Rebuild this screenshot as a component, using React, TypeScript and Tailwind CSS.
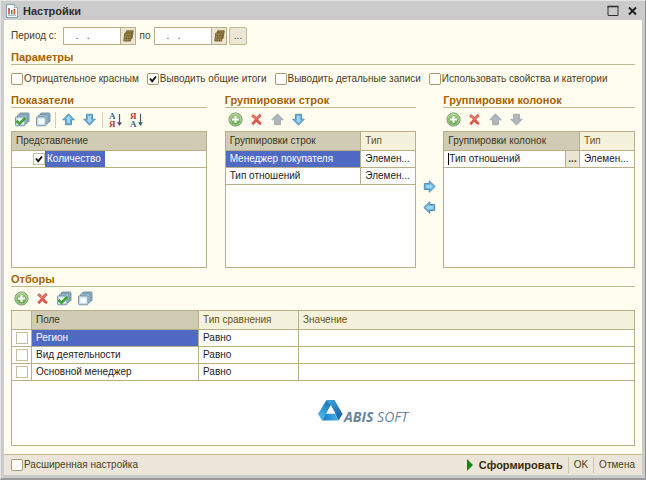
import React, { useState } from "react";

type IconProps = { muted?: boolean };

function AddIcon() {
  return (
    <svg width="15" height="15" viewBox="0 0 15 15">
      <defs>
        <linearGradient id="add" x1="0" y1="0" x2="0" y2="1">
          <stop offset="0" stopColor="#a9d08c" />
          <stop offset="1" stopColor="#5a9f45" />
        </linearGradient>
      </defs>
      <circle cx="7.5" cy="7.5" r="6.6" fill="url(#add)" stroke="#7f9a70" />
      <circle cx="7.5" cy="7.5" r="5.6" fill="none" stroke="#c3dfb0" strokeWidth=".8" />
      <path d="M7.500 4v7M4 7.500h7" stroke="#fff" strokeWidth="2" />
    </svg>
  );
}

function DeleteIcon() {
  return (
    <svg width="13" height="13" viewBox="0 0 13 13">
      <path d="M2 2.200Q5 4 6.500 6.500Q8 9.500 11 11M10.800 1.800Q8 4 6.500 6.500Q4.500 9 2.300 11.200" fill="none" stroke="#e0584c" strokeWidth="2.800" />
      <path d="M2.500 2.500L6.500 6M10 2.500L6.500 6" stroke="#f4968a" strokeWidth="1" />
    </svg>
  );
}

function ArrowIcon({ dir, muted }: IconProps & { dir: "up" | "down" | "left" | "right" }) {
  const turn = { up: 0, right: 90, down: 180, left: 270 }[dir];
  return (
    <svg width="13" height="13" viewBox="0 0 13 13">
      <g transform={`rotate(${turn} 6.5 6.5)`}>
        <path
          d="M6.500 .8L12.300 6.800H9.500V11.700H3.500V6.800H.7Z"
          fill={muted ? "#aab3b9" : "#62b2e2"}
          stroke={muted ? "#a3abb0" : "#5a86a6"}
          strokeWidth=".9"
          strokeLinejoin="round"
        />
        <path d="M6.500 2.800L9 5.800H8V10H5V5.800H4Z" fill={muted ? "#b1b9be" : "#9ad6f6"} />
      </g>
    </svg>
  );
}

function StackIcon({ checked }: { checked?: boolean }) {
  return (
    <svg width="16" height="15" viewBox="0 0 16 15">
      <g stroke="#6d8ca2" strokeWidth=".9">
        <rect x="5.500" y="1" width="9.500" height="9" rx="1" fill="#8fb0c6" />
        <rect x="3.500" y="2.800" width="9.500" height="9" rx="1" fill="#a9c6d8" />
        <rect x="1.500" y="4.800" width="9.500" height="9" rx="1" fill="#c3dbe9" />
      </g>
      <rect x="3.300" y="6.600" width="6" height="5.500" fill="#f6fbfe" />
      {checked && <path d="M2.500 8.800L5.500 11.600L11.300 5.800" fill="none" stroke="#3fa02c" strokeWidth="2.600" />}
    </svg>
  );
}

function SortIcon({ reverse }: { reverse?: boolean }) {
  return (
    <svg width="14" height="16" viewBox="0 0 14 16">
      <g className="font-['Liberation_Serif',serif] text-[9px] font-bold">
        <text x="0" y="7" fill={reverse ? "#b83a36" : "#2f6690"}>{reverse ? "Я" : "А"}</text>
        <text x="0" y="15" fill={reverse ? "#2f6690" : "#b83a36"}>{reverse ? "А" : "Я"}</text>
      </g>
      <path d="M10.500 2V13" stroke="#445c6c" strokeWidth="1.200" />
      <path d="M8 10.200H13L10.500 14Z" fill="#445c6c" />
    </svg>
  );
}

function CalendarIcon() {
  return (
    <svg width="11" height="12" viewBox="0 0 11 12">
      <path d="M3.500 .8H10.300L9 8.500H2.200Z" fill="#917c43" stroke="#6f5b28" strokeWidth=".8" />
      <path d="M1.800 3H8.600L7.600 11H.8Z" fill="#a8935a" stroke="#6f5b28" strokeWidth=".9" />
      <path d="M4.100 3L3.100 11M6.400 3L5.400 11M1.500 5.600H8.300M1.200 8.300H8" stroke="#6f5b28" strokeWidth=".7" />
    </svg>
  );
}

function ReportIcon() {
  return (
    <svg width="12" height="14" viewBox="0 0 12 14">
      <path d="M.5 .5H8.500L11.500 3.500V13.500H.5Z" fill="#f4fafd" stroke="#7da4b9" />
      <path d="M8.500 .5V3.500H11.500" fill="#c4dce8" stroke="#7da4b9" strokeWidth=".7" />
      <path d="M3 4V10.500" stroke="#d9443c" strokeWidth="1.600" />
      <path d="M5.700 6V10.500" stroke="#43a047" strokeWidth="1.600" />
      <path d="M8.400 5V10.500" stroke="#d9443c" strokeWidth="1.600" />
      <path d="M2 11.500H10" stroke="#8fb0c0" strokeWidth=".8" />
    </svg>
  );
}

function Logo() {
  return (
    <div className="flex items-end gap-px">
      <svg width="25" height="21" viewBox="0 0 25 21" className="mb-1">
        <defs>
          <linearGradient id="left" x1=".7" y1="0" x2=".2" y2="1">
            <stop offset="0" stopColor="#1672b8" />
            <stop offset="1" stopColor="#4dc0f2" />
          </linearGradient>
          <linearGradient id="right" x1="0" y1="0" x2="1" y2="1">
            <stop offset="0" stopColor="#3fa7e2" />
            <stop offset="1" stopColor="#155a9f" />
          </linearGradient>
          <linearGradient id="base" x1="0" y1="0" x2="1" y2="0">
            <stop offset="0" stopColor="#1b78c0" />
            <stop offset="1" stopColor="#43b3ea" />
          </linearGradient>
        </defs>
        <path d="M8.500 0L13 5L8 14L4 20.500L0 14Z" fill="url(#left)" />
        <path d="M8.500 0H16.500L24.500 14L20.500 20.500L13 5.500Z" fill="url(#right)" />
        <path d="M4 20.500L8 13.500H17L20.500 20.500Z" fill="url(#base)" />
        <path d="M12.800 5.500L17.500 13.500H8.200Z" fill="#fff" />
      </svg>
      <span className="font-['Open_Sans',sans-serif] text-[14px] leading-4 italic text-[#6786a0]">
        <b>ABIS</b> <span>SOFT</span>
      </span>
    </div>
  );
}

function Tick({ label, on = false, name, square = false }: { label?: string; on?: boolean; name?: string; square?: boolean }) {
  const [value, setValue] = useState(on);
  return (
    <label className="flex items-center gap-px whitespace-nowrap">
      <span className="relative block size-3 shrink-0">
        <input
          type="checkbox"
          aria-label={name}
          checked={value}
          onChange={() => setValue(!value)}
          className={`block size-3 appearance-none border bg-white ${square ? "border-[#c6bf9b]" : "rounded-xs border-[#a39a72]"}`}
        />
        {value && (
          <svg viewBox="0 0 12 12" className="pointer-events-none absolute inset-0">
            <path d="M3 5.500L5.200 8.300L9 3.500" fill="none" stroke="#111" strokeWidth="1.900" />
          </svg>
        )}
      </span>
      {label}
    </label>
  );
}

function Tool({ name, children }: { name: string; children: React.ReactNode }) {
  return (
    <button type="button" aria-label={name} className="flex size-[21px] items-center justify-center">
      {children}
    </button>
  );
}

function Toolbar({ children }: { children: React.ReactNode }) {
  return <div className="flex h-[23px] shrink-0 items-center">{children}</div>;
}

function Heading({ children }: { children: React.ReactNode }) {
  return <h2 className="h-[15px] shrink-0 border-b border-[#c3b98c] text-[11px] leading-[14px] font-bold whitespace-nowrap text-[#a66300]">{children}</h2>;
}

function Separator() {
  return <span className="mx-0.5 h-4 w-px bg-[#d3ccb0]" />;
}

function DateField({ id }: { id: string }) {
  return (
    <span className="flex h-[18px] w-[73px] border border-[#b8af86] bg-white">
      <input id={id} defaultValue="  .   ." className="min-w-0 flex-1 bg-white pl-1.5 whitespace-pre text-[#333]" />
      <button type="button" aria-label="Календарь" className="flex w-[15px] items-center justify-center border-l border-[#b8af86] bg-[#ebe5d3]">
        <CalendarIcon />
      </button>
    </span>
  );
}

const frame = "min-h-0 flex-1 border border-[#b8af86] bg-white";
const table = "w-full table-fixed border-separate border-spacing-0 text-left text-[#1c1c1c]";
const th = "h-[19px] overflow-hidden border-b border-[#b8af86] p-0 pl-1 font-normal whitespace-nowrap";
const active = "bg-[#cfcbb5] text-[#3d3418]";
const plain = "border-l bg-[#f4f1dc] text-[#6a5316]";
const td = "h-[17px] overflow-hidden border-b border-[#b8af86] p-0 pl-1 leading-4 whitespace-nowrap";
const selected = "bg-[#5069c2] text-white";

const filters = ["Регион", "Вид деятельности", "Основной менеджер"];

export default function App() {
  return (
    <div className="flex h-screen flex-col border-t border-r border-b-2 border-l border-t-[#e4e4e4] border-r-[#8f8f8f] border-b-[#9a9a9a] border-l-[#e4e4e4] bg-[#cbcbcb] px-[3px] pb-[3px] font-['Liberation_Sans',Arial,sans-serif] text-[10px] leading-[14px] text-[#4a4023]">
      <header className="flex h-[19px] shrink-0 items-center pr-1 pl-0.5">
        <ReportIcon />
        <h1 className="ml-[5px] flex-1 text-[11px] font-bold text-[#2b2b2b]">Настройки</h1>
        <button type="button" aria-label="Развернуть" className="mr-2">
          <svg width="12" height="12" viewBox="0 0 12 12">
            <path d="M1 1.500H11V10.500H1Z" fill="none" stroke="#333" />
            <path d="M.5 1.500H11.500" stroke="#333" strokeWidth="1.600" />
          </svg>
        </button>
        <button type="button" aria-label="Закрыть">
          <svg width="11" height="12" viewBox="0 0 11 12">
            <path d="M2 2.500L9 9.500M9 2.500L2 9.500" stroke="#222" strokeWidth="2" />
          </svg>
        </button>
      </header>

      <main className="flex min-h-0 flex-1 flex-col bg-[#fffcf0] px-[7px] pt-[7px] pb-2">
        <div className="flex shrink-0 items-center">
          <label htmlFor="from" className="w-[52px]">Период с:</label>
          <DateField id="from" />
          <label htmlFor="to" className="w-[18px] text-center">по</label>
          <DateField id="to" />
          <button type="button" aria-label="Выбрать период" className="ml-0.5 h-[18px] w-[18px] rounded-xs border border-[#c3b98c] bg-[#ebe6d8] leading-3">...</button>
        </div>

        <div className="mt-[5px] shrink-0">
          <Heading>Параметры</Heading>
        </div>
        <div className="mt-[7px] flex shrink-0 items-center gap-2">
          <Tick label="Отрицательное красным" />
          <Tick label="Выводить общие итоги" on />
          <Tick label="Выводить детальные записи" />
          <Tick label="Использовать свойства и категории" />
        </div>

        <div className="mt-[7px] grid min-h-0 flex-1 grid-cols-[196fr_18px_192fr_27px_192fr]">
          <section className="flex min-h-0 flex-col">
            <Heading>Показатели</Heading>
            <Toolbar>
              <Tool name="Отметить все"><StackIcon checked /></Tool>
              <Tool name="Снять отметки"><StackIcon /></Tool>
              <Separator />
              <Tool name="Вверх"><ArrowIcon dir="up" /></Tool>
              <Tool name="Вниз"><ArrowIcon dir="down" /></Tool>
              <Separator />
              <Tool name="Сортировать по возрастанию"><SortIcon /></Tool>
              <Tool name="Сортировать по убыванию"><SortIcon reverse /></Tool>
            </Toolbar>
            <div className={frame}>
              <table className={table}>
                <thead>
                  <tr><th className={`${th} ${active}`}>Представление</th></tr>
                </thead>
                <tbody>
                  <tr>
                    <td className={td}>
                      <div className="flex h-4 items-center pl-[17px]">
                        <Tick name="Количество" on square />
                        <span className={`h-4 pr-1 pl-0.5 ${selected}`}>Количество</span>
                      </div>
                    </td>
                  </tr>
                </tbody>
              </table>
            </div>
          </section>

          <section className="col-start-3 flex min-h-0 flex-col">
            <Heading>Группировки строк</Heading>
            <Toolbar>
              <Tool name="Добавить"><AddIcon /></Tool>
              <Tool name="Удалить"><DeleteIcon /></Tool>
              <Tool name="Вверх"><ArrowIcon dir="up" muted /></Tool>
              <Tool name="Вниз"><ArrowIcon dir="down" /></Tool>
            </Toolbar>
            <div className={frame}>
              <table className={table}>
                <colgroup><col /><col className="w-[55px]" /></colgroup>
                <thead>
                  <tr>
                    <th className={`${th} ${active}`}>Группировки строк</th>
                    <th className={`${th} ${plain}`}>Тип</th>
                  </tr>
                </thead>
                <tbody>
                  <tr>
                    <td className={`${td} ${selected}`}>Менеджер покупателя</td>
                    <td className={`${td} border-l`}>Элемен...</td>
                  </tr>
                  <tr>
                    <td className={td}>Тип отношений</td>
                    <td className={`${td} border-l`}>Элемен...</td>
                  </tr>
                </tbody>
              </table>
            </div>
          </section>

          <div className="flex flex-col items-center pt-[83px]">
            <Tool name="Перенести в колонки"><ArrowIcon dir="right" /></Tool>
            <Tool name="Перенести в строки"><ArrowIcon dir="left" /></Tool>
          </div>

          <section className="flex min-h-0 flex-col">
            <Heading>Группировки колонок</Heading>
            <Toolbar>
              <Tool name="Добавить"><AddIcon /></Tool>
              <Tool name="Удалить"><DeleteIcon /></Tool>
              <Tool name="Вверх"><ArrowIcon dir="up" muted /></Tool>
              <Tool name="Вниз"><ArrowIcon dir="down" muted /></Tool>
            </Toolbar>
            <div className={frame}>
              <table className={table}>
                <colgroup><col /><col className="w-[55px]" /></colgroup>
                <thead>
                  <tr>
                    <th className={`${th} ${active}`}>Группировки колонок</th>
                    <th className={`${th} ${plain}`}>Тип</th>
                  </tr>
                </thead>
                <tbody>
                  <tr>
                    <td className={td}>
                      <div className="flex h-4 items-center">
                        <span className="h-3 w-px bg-black" />
                        <input aria-label="Группировка колонок" defaultValue="Тип отношений" className="h-4 min-w-0 flex-1 bg-white" />
                        <button type="button" aria-label="Выбрать" className="h-4 w-[14px] border-l border-[#b8af86] bg-[#ebe5d3] leading-3 font-bold text-[#4a4023]">...</button>
                      </div>
                    </td>
                    <td className={`${td} border-l`}>Элемен...</td>
                  </tr>
                </tbody>
              </table>
            </div>
          </section>
        </div>

        <section className="mt-1 flex min-h-0 flex-1 flex-col">
          <Heading>Отборы</Heading>
          <Toolbar>
            <Tool name="Добавить"><AddIcon /></Tool>
            <Tool name="Удалить"><DeleteIcon /></Tool>
            <Tool name="Отметить все"><StackIcon checked /></Tool>
            <Tool name="Снять отметки"><StackIcon /></Tool>
          </Toolbar>
          <div className={`${frame} flex flex-col`}>
            <table className={table}>
              <colgroup>
                <col className="w-[19px]" />
                <col className="w-[167px]" />
                <col className="w-[100px]" />
                <col />
              </colgroup>
              <thead>
                <tr>
                  <th className={`${th} bg-[#f4f1dc]`} />
                  <th className={`${th} border-l ${active}`}>Поле</th>
                  <th className={`${th} ${plain}`}>Тип сравнения</th>
                  <th className={`${th} ${plain}`}>Значение</th>
                </tr>
              </thead>
              <tbody>
                {filters.map((field, i) => (
                  <tr key={field}>
                    <td className={td}><Tick name={field} square /></td>
                    <td className={`${td} border-l ${i === 0 ? selected : ""}`}>{field}</td>
                    <td className={`${td} border-l`}>Равно</td>
                    <td className={`${td} border-l`} />
                  </tr>
                ))}
              </tbody>
            </table>
            <div className="flex flex-1 items-center justify-center pl-20">
              <Logo />
            </div>
          </div>
        </section>
      </main>

      <footer className="flex h-[21px] shrink-0 items-center border-t border-[#c3b98c] bg-[#ebe6d9] px-[7px]">
        <div className="flex-1"><Tick label="Расширенная настройка" /></div>
        <button type="button" className="flex items-center gap-[6px] text-[11px] font-bold text-[#3b2c08]">
          <svg width="6" height="12" viewBox="0 0 6 12"><path d="M0 0L6 6L0 12Z" fill="#0a8a12" /></svg>
          Сформировать
        </button>
        <span className="mx-[5px] h-4 w-px bg-[#cfc8b0]" />
        <button type="button">OK</button>
        <span className="mx-[5px] h-4 w-px bg-[#cfc8b0]" />
        <button type="button">Отмена</button>
      </footer>
    </div>
  );
}
